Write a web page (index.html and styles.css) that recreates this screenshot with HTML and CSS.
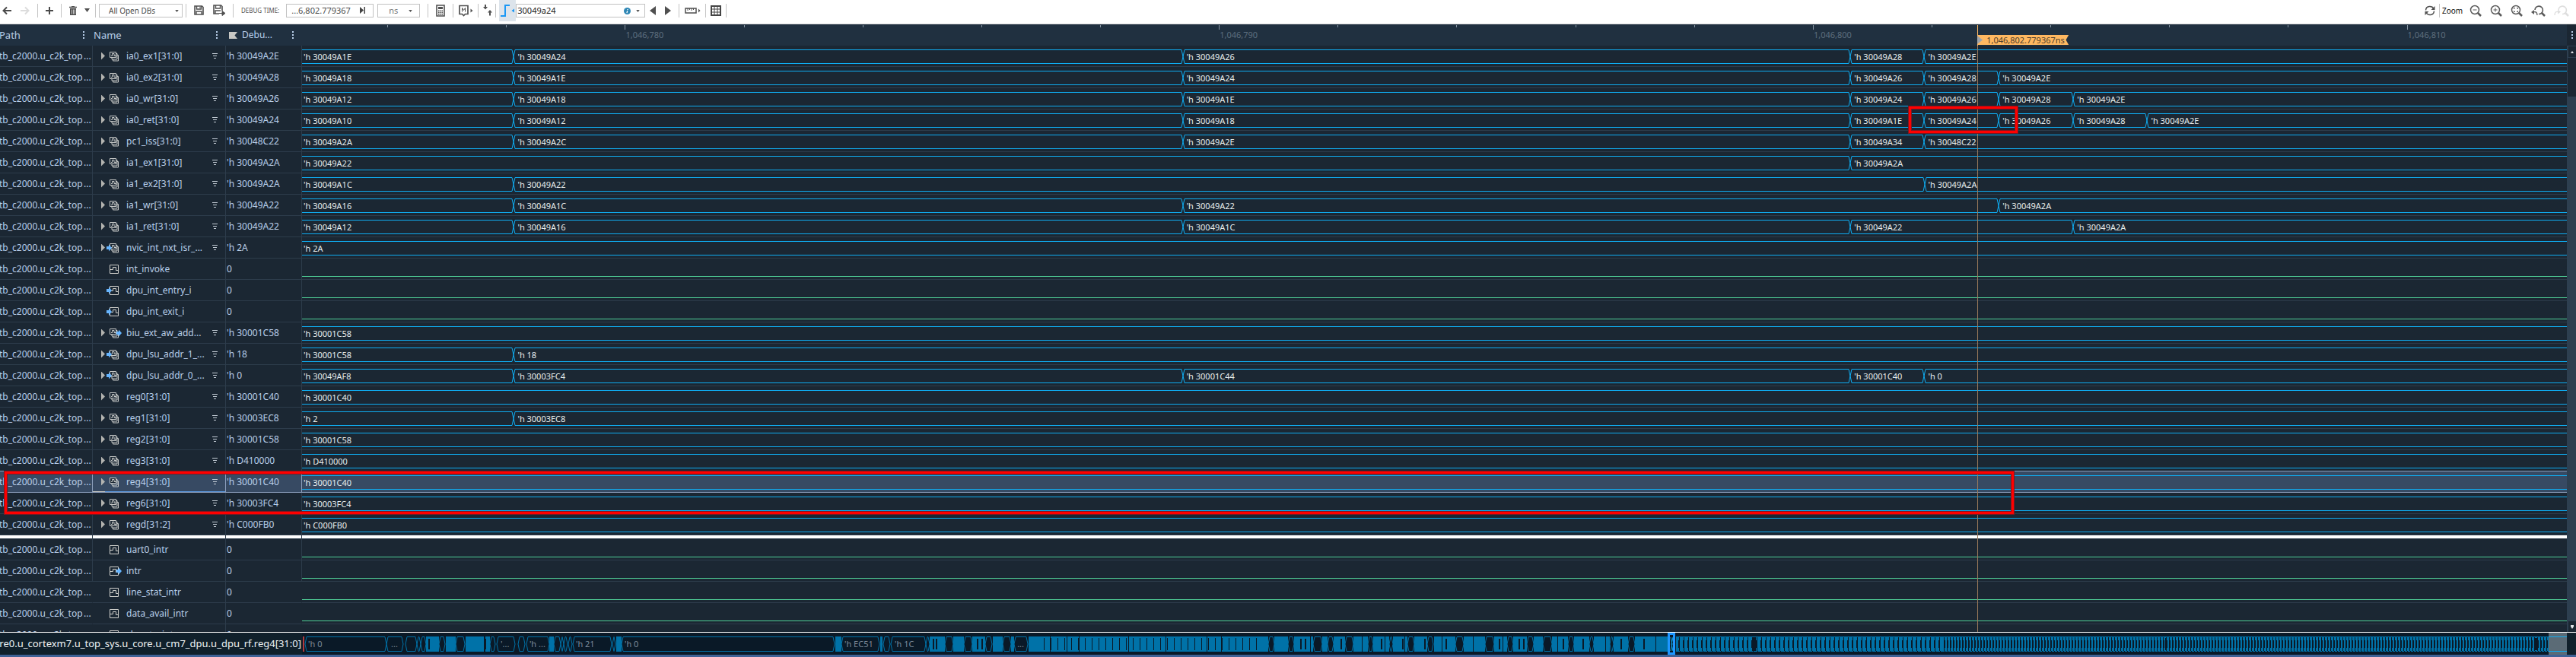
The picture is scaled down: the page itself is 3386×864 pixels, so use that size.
FILE: index.html
```html
<!DOCTYPE html>
<html lang="en">
<head>
<meta charset="utf-8">
<title>Waveform viewer</title>
<link rel="stylesheet" href="styles.css">
</head>
<body>
<svg class="sprite" aria-hidden="true">
  <symbol id="bus" viewBox="0 0 20 14">
    <path d="M4.500 1.500h8v7h-8z" fill="#1b2733" stroke="#c9cbc9"/>
    <path d="M6 6.500h1.500v-3h2.500v3h2" fill="none" stroke="#c9cbc9"/>
    <path d="M12.500 3.500h1.500v7.500h-7v-2.500M14 5.500h1.500v7.500h-7v-2" fill="none" stroke="#c9cbc9"/>
  </symbol>
  <symbol id="bit" viewBox="0 0 20 14">
    <path d="M4.500 1.500h11v11h-11z" fill="none" stroke="#d0d0cc"/>
    <path d="M5 7.500h3.500v-3h4v4h2.500" fill="none" stroke="#d0d0cc"/>
  </symbol>
  <symbol id="in" viewBox="0 0 20 14"><path d="M0 5h3V2.500L7 7l-4 4.500V9H0z" fill="#66b5ff"/></symbol>
  <symbol id="out" viewBox="0 0 20 14"><path d="M13 5h3V2.500L20 7l-4 4.500V9h-3z" fill="#66b5ff"/></symbol>
  <symbol id="filter" viewBox="0 0 8 8"><path d="M0 .5h7M1 3.500h5M2 6.500h3" stroke="#c2cbd4" fill="none"/></symbol>
  <symbol id="cross" viewBox="0 0 6 19"><path d="M0 .5h1l4 18h1M6 .5H5l-4 18H0" stroke="#0fadf2" fill="none"/></symbol>
  <symbol id="caret" viewBox="0 0 6 4"><path d="M0 0h6L3 4z" fill="#555"/></symbol>
  <symbol id="lens" viewBox="0 0 16 16"><circle cx="7" cy="7" r="5.500" fill="none" stroke="currentColor" stroke-width="1.500"/><path d="M11 11l4 4" stroke="currentColor" stroke-width="2.500"/></symbol>
</svg>

<header class="toolbar">
  <button class="tool" aria-label="Back"><svg width="12" height="12" viewBox="0 0 12 12"><path d="M12 6H2M6 1.500L1.500 6 6 10.500" fill="none" stroke="#4a4a4a" stroke-width="2"/></svg></button>
  <button class="tool after-wide" aria-label="Forward"><svg width="12" height="12" viewBox="0 0 12 12"><path d="M0 6h10M6 1.500L10.500 6 6 10.500" fill="none" stroke="#dcdcdc" stroke-width="2"/></svg></button>
  <i class="sep"></i>
  <button class="tool" aria-label="Add"><svg width="10" height="10" viewBox="0 0 10 10"><path d="M5 0v10M0 5h10" stroke="#4a4a4a" stroke-width="2"/></svg></button>
  <i class="sep"></i>
  <button class="tool" aria-label="Delete"><svg width="10" height="12" viewBox="0 0 10 12"><path d="M0 1.500h10M3 .5h4" stroke="#505050" stroke-width="1.500"/><path d="M1 3h8v9H1z" fill="#505050"/><path d="M3.500 4.500v6M5.500 4.500v6M7.500 4.500v6" stroke="#fff" stroke-width=".7"/></svg></button>
  <button class="tool after" aria-label="Delete options"><svg width="7" height="5" viewBox="0 0 7 5"><path d="M0 0h7L3.500 5z" fill="#505050"/></svg></button>
  <i class="sep narrow"></i>
  <span class="field db"><select aria-label="Database"><option>All Open DBs</option></select><svg class="drop" width="5" height="3"><use href="#caret"/></svg></span>
  <i class="sep tight"></i>
  <button class="tool indent" aria-label="Save"><svg width="13" height="13" viewBox="0 0 13 13"><path d="M1 1h9.500L12 2.500V12H1z" fill="none" stroke="#505050" stroke-width="1.600"/><path d="M3.500 1v4h6V1M3 12V8h7v4" fill="none" stroke="#505050" stroke-width="1.400"/><path d="M8 2v2" stroke="#505050"/></svg></button>
  <button class="tool after-wide" aria-label="Save as"><svg width="16" height="15" viewBox="0 0 16 15"><path d="M8 12H1V1h9.500L12 2.500V8" fill="none" stroke="#505050" stroke-width="1.600"/><path d="M3.500 1v4h6V1M3 12V8h7" fill="none" stroke="#505050" stroke-width="1.400"/><path d="M8 11.500h5M12 8.500l4 3-4 3z" stroke="#505050" fill="#505050"/></svg></button>
  <i class="sep"></i>
  <label class="caption" for="time">DEBUG TIME:</label>
  <span class="field time"><input id="time" value="...6,802.779367"><svg class="next" width="8" height="9" viewBox="0 0 8 9"><path d="M0 0l5 4.500L0 9zM5.500 0H7v9H5.500z" fill="#444"/></svg></span>
  <span class="field unit"><select aria-label="Time unit"><option>ns</option></select><svg class="drop" width="5" height="3"><use href="#caret"/></svg></span>
  <i class="sep"></i>
  <button class="tool" aria-label="Calculator"><svg width="12" height="16" viewBox="0 0 12 16"><path d="M1 1h10v14H1z" fill="none" stroke="#505050" stroke-width="1.600"/><path d="M3 3h6v3H3zM3 7.500h1.500V9H3zM5.200 7.500h1.500V9H5.200zM7.500 7.500H9V9H7.500zM3 9.800h1.500v1.400H3zM5.200 9.800h1.500v1.400H5.200zM7.500 9.800H9v1.400H7.500zM3 12h1.500v1.400H3zM5.200 12h1.500v1.400H5.200zM7.500 12H9v1.400H7.500z" fill="#505050"/></svg></button>
  <i class="sep"></i>
  <button class="tool pull" aria-label="Marker"><svg width="19" height="16" viewBox="0 0 19 16"><path d="M1 1.500h11v11H8.500l-2 2-2-2H1z" fill="none" stroke="#505050" stroke-width="1.700"/><path d="M4.500 9.500v-5l2 3 2-3v5" fill="none" stroke="#505050"/><path d="M15.500 5.500l3 2.500-3 2.500z" fill="#505050"/></svg></button>
  <i class="sep snug"></i>
  <button class="tool" aria-label="Snap to edge"><svg width="12" height="15" viewBox="0 0 12 15"><path d="M2 0h2v3h2L3 6.500 0 3h2zM8 14.500h2v-4h2L9 7l-3 3.500h2z" fill="#505050"/></svg></button>
  <i class="sep tight"></i>
  <button class="edge" aria-label="Search value"><svg width="19" height="16" viewBox="0 0 19 16"><path d="M0 15h6V1h6" fill="none" stroke="#1b98f5" stroke-width="2"/><path d="M18 5.500v5L14.500 8z" fill="#1b98f5"/></svg></button>
  <span class="field find"><input aria-label="Value to find" value="30049a24"><svg class="info" width="9" height="9" viewBox="0 0 9 9"><circle cx="4.500" cy="4.500" r="4.500" fill="#2f87b5"/><path d="M5 2v1M4.700 4L4 7.200" stroke="#fff" stroke-width="1.300"/></svg><svg class="drop" width="5" height="3"><use href="#caret"/></svg></span>
  <button class="tool gap" aria-label="Previous"><svg width="8" height="12" viewBox="0 0 8 12"><path d="M8 0v12L0 6z" fill="#505050"/></svg></button>
  <button class="tool after-wide" aria-label="Next"><svg width="8" height="12" viewBox="0 0 8 12"><path d="M0 0v12l8-6z" fill="#505050"/></svg></button>
  <i class="sep"></i>
  <button class="tool pull" aria-label="Ruler"><svg width="21" height="8" viewBox="0 0 21 8"><path d="M1 1h14v6H1z" fill="none" stroke="#505050" stroke-width="1.500"/><path d="M4 1v3M6.500 1v2M9 1v3M11.500 1v2" stroke="#505050"/><path d="M18 1.500L20.500 4 18 6.500z" fill="#505050"/></svg></button>
  <i class="sep snug"></i>
  <button class="tool" aria-label="Table"><svg width="14" height="14" viewBox="0 0 14 14"><path d="M1 1h12v12H1z" fill="none" stroke="#444" stroke-width="2"/><path d="M5 1v12M9 1v12M1 5h12M1 9h12" stroke="#444"/></svg></button>
  <i class="sep snug"></i>
  <div class="zoom">
    <button class="tool" aria-label="Refresh"><svg width="14" height="14" viewBox="0 0 14 14"><path d="M1.500 6.500C2 0 10 .5 12 4.500M12.500 7.500C12 14 4 13.500 2 9.500" fill="none" stroke="#505050" stroke-width="1.500"/><path d="M13.500 1v5h-5zM.5 13V8h5z" fill="#505050"/></svg></button>
    <i class="sep zoomsep"></i>
    <span class="zoomlabel">Zoom</span>
    <button class="tool lens" aria-label="Zoom out"><svg width="16" height="16" viewBox="0 0 16 16"><use href="#lens"/><path d="M4.500 7h5" stroke="currentColor"/></svg></button>
    <button class="tool lens" aria-label="Zoom in"><svg width="16" height="16" viewBox="0 0 16 16"><use href="#lens"/><path d="M4.500 7h5M7 4.500v5" stroke="currentColor"/></svg></button>
    <button class="tool lens" aria-label="Zoom to fit"><svg width="16" height="16" viewBox="0 0 16 16"><use href="#lens"/><path d="M4.500 6V4.500H6M8 4.500h1.500V6M9.500 8v1.500H8M6 9.500H4.500V8" fill="none" stroke="currentColor"/></svg></button>
    <button class="tool lens" aria-label="Previous zoom"><svg width="19" height="16" viewBox="0 0 19 16"><path d="M5 7a5.200 5.200 0 1 1 5 5.500" fill="none" stroke="currentColor" stroke-width="1.600"/><path d="M14 11l4 4" stroke="currentColor" stroke-width="2.500"/><path d="M3 10c3-1 5 0 5 4" fill="none" stroke="currentColor" stroke-width="1.300"/><path d="M4 7v6L0 10z" fill="currentColor"/></svg></button>
    <button class="tool lens off" aria-label="Next zoom"><svg width="20" height="16" viewBox="0 0 20 16"><path d="M6 7a5.200 5.200 0 1 1 5 5.500" fill="none" stroke="currentColor" stroke-width="1.600"/><path d="M15 11l4 4" stroke="currentColor" stroke-width="2.500"/><path d="M1 14c0-4 2-5 4-4.500" fill="none" stroke="currentColor" stroke-width="1.300"/><path d="M5 6.500v6L9 9.500z" fill="currentColor"/></svg></button>
  </div>
</header>

<main class="viewer">
  <div class="sheet">
    <table class="signals">
      <colgroup><col class="c-path"><col class="c-name"><col class="c-value"><col></colgroup>
      <thead>
        <tr>
          <th><div class="head path"><span>Path</span><i class="dots"></i></div></th>
          <th><div class="head name"><span>Name</span><i class="dots"></i></div></th>
          <th><div class="head value"><svg width="11" height="9" viewBox="0 0 11 9"><path d="M0 0h11L7.500 4.500 11 9H0z" fill="#c8c8c4"/></svg><span>Debu...</span><i class="dots"></i></div></th>
          <th><div class="ruler" id="ruler"></div></th>
        </tr>
      </thead>
      <tbody id="rows"></tbody>
    </table>
    <div class="overlay">
      <div class="cursor" id="cursor"><span class="flag"><svg width="7" height="11" viewBox="0 0 7 11"><path d="M0 0l7 5.500L0 11z" fill="#9aa3ad"/></svg>1,046,802.779367ns</span></div>
      <div class="mark value-mark"></div>
    </div>
  </div>
  <div class="side">
    <div class="corner"><i class="dots"></i></div>
    <div class="scroll">
      <button class="step" aria-label="Scroll up"><svg width="4" height="3"><path d="M0 3h4L2 0z" fill="#e0e4e8"/></svg></button>
      <div class="thumb"></div>
      <button class="step last" aria-label="Scroll down"><svg width="4" height="5"><path d="M0 0h4v2L2 5 0 2z" fill="#e0e4e8"/></svg></button>
    </div>
  </div>
  <div class="mark row-mark"></div>
</main>

<footer class="overview">
  <div class="trace">..re0.u_cortexm7.u_top_sys.u_core.u_cm7_dpu.u_dpu_rf.reg4[31:0]</div>
  <div class="map" id="map"></div>
  <div class="end"></div>
</footer>
<script src="app.js"></script>
</body>
</html>
```

FILE: styles.css
```css
* { box-sizing: border-box; }
body {
  margin: 0;
  height: 100vh;
  display: flex;
  flex-direction: column;
  overflow: hidden;
  background: #1b2733;
  color: #b9cfea;
  font: 12px/16px "Noto Sans", "Open Sans", sans-serif;
}
svg { display: block; flex: none; }
.sprite { position: absolute; width: 0; height: 0; }
button { border: 0; padding: 0; background: none; color: #5a5a5a; flex: none; display: flex; align-items: center; justify-content: center; }
input, select { font: inherit; color: inherit; border: 0; background: none; padding: 0; min-width: 0; outline: 0; appearance: none; height: 16px; }

/* Toolbar */
.toolbar {
  flex: none;
  height: 32px;
  padding: 0 9px 4px 3px;
  display: flex;
  align-items: center;
  background: #fff;
  border-bottom: 1px solid #dcdcdc;
  color: #4c4c4c;
  font-size: 11px;
}
.tool + .tool { margin-left: 12px; }
.tool.after { margin-left: 10px; }
.gap { margin-left: 6px; }
.pull { margin-left: -3px; }
.sep { flex: none; width: 1px; height: 18px; background: #c4c4c4; margin: 0 10px; }
.sep.narrow { margin: 0 4px 0 7px; }
.sep.tight { margin: 0 4px; }
.sep.snug { margin: 0 6px; }
.indent { margin-left: 6px; }
.field { flex: none; height: 18px; border: 1px solid #c2c2c2; display: flex; align-items: center; position: relative; }
.field select, .field input { flex: 1; width: 0; }
.drop { position: absolute; right: 4px; top: 7px; }
.db { width: 110px; padding-left: 12px; font-size: 10px; }
.caption { font-size: 8px; margin-right: 9px; color: #555; white-space: nowrap; }
.time { width: 115px; padding-left: 6px; margin-right: 5px; }
.next { position: absolute; right: 9px; top: 3px; }
.unit { width: 56px; padding-left: 14px; color: #777; }
.unit .drop { right: 9px; }
.edge { width: 22px; height: 28px; background: #dde4eb; }
.find { width: 170px; padding-left: 1px; color: #222; }
.find .drop { right: 6px; }
.info { position: absolute; right: 18px; top: 4px; }
.zoom { margin-left: auto; display: flex; align-items: center; }
.zoomsep { margin: 0 3px 0 5px; }
.zoomlabel { font-size: 10px; color: #111; width: 27px; margin-right: 9px; }
.lens.off { color: #dedede; }
.zoom .lens + .lens { margin-left: 11px; }

/* Signal sheet */
.viewer { flex: 1; min-height: 0; display: flex; position: relative; overflow: hidden; }
.sheet { flex: 1; min-width: 0; position: relative; overflow: hidden; }
.signals { width: 100%; table-layout: fixed; border-spacing: 0; }
.c-path { width: 122px; }
.c-name { width: 175px; }
.c-value { width: 100px; }
th, td { padding: 0; font-weight: 400; text-align: left; vertical-align: top; white-space: nowrap; }
th { height: 28px; background: #203040; }
td { height: 28px; border-bottom: 1px solid #2d3c4b; }
td:nth-child(-n+3) { border-right: 1px solid #2d3c4b; }
tr.open td:nth-child(1), tr.open td:nth-child(3) { border-right-color: transparent; }
.head { display: flex; align-items: center; height: 28px; }
.head.path { margin-left: -1px; padding-right: 11px; font-size: 13px; }
.head.name { padding: 0 11px 0 1px; font-size: 13px; }
.head.value { padding: 0 11px 0 4px; gap: 6px; }
.dots { width: 2px; height: 11px; margin-left: auto; background: linear-gradient(#b9cfea 2px, transparent 2px 4px, #b9cfea 4px 6px, transparent 6px 8px, #b9cfea 8px 10px, transparent 10px); }
.cell { display: flex; align-items: center; height: 27px; }
.cell.path span { width: 111px; margin-left: -1px; overflow: hidden; }
.cell.value { padding-left: 1px; }
.cell.name { padding: 0 9px 0 11px; }
.expand { width: 5px; height: 10px; background: #b4b4b0; clip-path: polygon(0 0, 100% 50%, 0 100%); }
.expand.none { visibility: hidden; }
.kind { width: 20px; height: 14px; margin: 0 6px 0 2px; }
.filter { width: 8px; height: 8px; margin-left: auto; }

tr.before td { border-bottom-color: #8c9fbd; }
tr.selected td { background: #374a63; border-color: #8c9fbd; }
tr.selected .cell.name { background: linear-gradient(to right, #c8c8c4 16px, #5a97dc 16px) bottom / 100% 1px no-repeat; }
tr.divider td { height: 5px; background: #fff; border-bottom-color: #2d3c4b; }

/* Waveforms */
.wave { display: flex; height: 19px; margin: 5px 0 3px; color: #e6ecec; font-size: 11px; line-height: 17px; }
.seg { display: flex; min-width: 0; }
.cross { width: 6px; height: 19px; margin-left: -3px; }
.level { flex: 1; min-width: 0; padding-left: 2px; border: solid #0fadf2; border-width: 1px 0; }
.seg:not(:last-child) .level { margin-right: 3px; }
.low { height: 19px; margin: 5px 0 3px; border-bottom: 1px solid #4fcf97; }

.ruler { position: relative; height: 28px; color: #5d6e7e; font-size: 11px; }
.tick { position: absolute; top: 1px; height: 3px; border-left: 1px solid #8795a3; }
.tick.major { height: 6px; }
.tick span { position: absolute; left: 0; top: 5px; }
.overlay { position: absolute; left: 397px; right: 0; top: 0; bottom: 0; pointer-events: none; }
.cursor { position: absolute; top: 1px; bottom: 0; width: 1px; background: linear-gradient(#ffb861 27px, #98795a 27px); }
.flag { position: absolute; left: 0; top: 13px; height: 13px; width: 120px; display: flex; align-items: center; gap: 5px; background: #ffb861; color: #4b3d2c; font-size: 11px; line-height: 13px; white-space: nowrap; clip-path: polygon(0 0, 100% 0, 97% 50%, 100% 100%, 0 100%); }
.mark { position: absolute; border: 3px solid #f00; outline: 1px solid #7b1722; box-shadow: inset 0 0 0 1px #7b1722; }
.value-mark { left: 70.95%; width: 4.8%; top: 108px; height: 35px; }
.row-mark { left: 6px; width: 78%; top: 588px; height: 56px; pointer-events: none; }

.side { flex: none; width: 12px; display: flex; flex-direction: column; }
.corner { height: 28px; flex: none; display: flex; align-items: center; padding-right: 4px; }
.scroll { flex: 1; display: flex; flex-direction: column; background: #2d3f50; padding: 1px 0 0 1px; }
.step { height: 14px; background: #1b2733; margin: 0 0 1px 1px; }
.step.last { margin: auto 0 0 1px; }
.thumb { height: 51px; background: #1b2733; }

/* Overview strip */
.overview { flex: none; height: 33px; display: flex; background: #10202b; border-top: 1px solid #fff; border-bottom: 3px solid #3f6296; }
.trace { width: 397px; flex: none; display: flex; justify-content: flex-end; padding-right: 1px; color: #f0f4f4; font-size: 13px; line-height: 28px; white-space: nowrap; overflow: hidden; }
.map { flex: 1; min-width: 0; position: relative; background: #0a1927; overflow: hidden; }
.map svg { width: 100%; height: 29px; }
.map span { position: absolute; top: 7px; font-size: 11px; line-height: 16px; color: #7c8b99; }
.end { width: 12px; flex: none; }
```

FILE: app.js
```js
const START = 774.563, SPAN = 38.132;
const pct = t => ((t - START) / SPAN * 100).toFixed(3) + '%';
const A = 778.129, B = 789.391, C = 800.632, D = 801.878, E = 803.13, F = 804.387, G = 805.631;

// name, kind, port direction, value at cursor, [first value, time, value, ...]
const signals = [
  ['ia0_ex1[31:0]', 'bus', '', "'h 30049A2E", ['30049A1E', A, '30049A24', B, '30049A26', C, '30049A28', D, '30049A2E']],
  ['ia0_ex2[31:0]', 'bus', '', "'h 30049A28", ['30049A18', A, '30049A1E', B, '30049A24', C, '30049A26', D, '30049A28', E, '30049A2E']],
  ['ia0_wr[31:0]', 'bus', '', "'h 30049A26", ['30049A12', A, '30049A18', B, '30049A1E', C, '30049A24', D, '30049A26', E, '30049A28', F, '30049A2E']],
  ['ia0_ret[31:0]', 'bus', '', "'h 30049A24", ['30049A10', A, '30049A12', B, '30049A18', C, '30049A1E', D, '30049A24', E, '30049A26', F, '30049A28', G, '30049A2E']],
  ['pc1_iss[31:0]', 'bus', '', "'h 30048C22", ['30049A2A', A, '30049A2C', B, '30049A2E', C, '30049A34', D, '30048C22']],
  ['ia1_ex1[31:0]', 'bus', '', "'h 30049A2A", ['30049A22', C, '30049A2A']],
  ['ia1_ex2[31:0]', 'bus', '', "'h 30049A2A", ['30049A1C', A, '30049A22', D, '30049A2A']],
  ['ia1_wr[31:0]', 'bus', '', "'h 30049A22", ['30049A16', A, '30049A1C', B, '30049A22', E, '30049A2A']],
  ['ia1_ret[31:0]', 'bus', '', "'h 30049A22", ['30049A12', A, '30049A16', B, '30049A1C', C, '30049A22', F, '30049A2A']],
  ['nvic_int_nxt_isr_...', 'bus', 'in', "'h 2A", ['2A']],
  ['int_invoke', 'bit', '', '0'],
  ['dpu_int_entry_i', 'bit', 'in', '0'],
  ['dpu_int_exit_i', 'bit', 'in', '0'],
  ['biu_ext_aw_add...', 'bus', 'out', "'h 30001C58", ['30001C58']],
  ['dpu_lsu_addr_1_...', 'bus', 'in', "'h 18", ['30001C58', A, '18']],
  ['dpu_lsu_addr_0_...', 'bus', 'in', "'h 0", ['30049AF8', A, '30003FC4', B, '30001C44', C, '30001C40', D, '0']],
  ['reg0[31:0]', 'bus', '', "'h 30001C40", ['30001C40']],
  ['reg1[31:0]', 'bus', '', "'h 30003EC8", ['2', A, '30003EC8']],
  ['reg2[31:0]', 'bus', '', "'h 30001C58", ['30001C58']],
  ['reg3[31:0]', 'bus', '', "'h D410000", ['D410000'], 'before'],
  ['reg4[31:0]', 'bus', '', "'h 30001C40", ['30001C40'], 'selected'],
  ['reg6[31:0]', 'bus', '', "'h 30003FC4", ['30003FC4']],
  ['regd[31:2]', 'bus', '', "'h C000FB0", ['C000FB0']],
  null,
  ['uart0_intr', 'bit', '', '0'],
  ['intr', 'bit', 'out', '0'],
  ['line_stat_intr', 'bit', '', '0', null, 'open'],
  ['data_avail_intr', 'bit', '', '0', null, 'open'],
  ['char_to_intr', 'bit', '', '0', null, 'open']
];

function wave(v) {
  if (!v) return '<div class="low"></div>';
  let html = '';
  for (let i = 0; i < v.length; i += 2) {
    const from = i ? v[i - 1] : START;
    const to = i + 1 < v.length ? v[i + 1] : START + SPAN;
    const width = ((to - from) / SPAN * 100).toFixed(3);
    html += `<div class="seg" style="width:${width}%">${i ? '<svg class="cross"><use href="#cross"/></svg>' : ''}<div class="level">'h ${v[i]}</div></div>`;
  }
  return `<div class="wave">${html}</div>`;
}

document.getElementById('rows').innerHTML = signals.map(s => {
  if (!s) return '<tr class="divider"><td></td><td></td><td></td><td></td></tr>';
  const [name, kind, port, value, v, cls = ''] = s;
  const bus = kind === 'bus';
  return `<tr class="${cls}">
    <td><div class="cell path"><span>tb_c2000.u_c2k_top</span>...</div></td>
    <td><div class="cell name"><button class="expand${bus ? '' : ' none'}" aria-label="Expand ${name}"></button>
      <svg class="kind"><use href="#${kind}"/>${port ? `<use href="#${port}"/>` : ''}</svg>${name}
      ${bus ? '<svg class="filter"><use href="#filter"/></svg>' : ''}</div></td>
    <td><div class="cell value">${value}</div></td>
    <td>${wave(v)}</td></tr>`;
}).join('');

let ticks = '';
for (let t = 776; t <= 812; t += 2) {
  const major = t % 10 === 0;
  ticks += `<div class="tick${major ? ' major' : ''}" style="left:${pct(t)}">${major ? `<span>1,046,${t}</span>` : ''}</div>`;
}
document.getElementById('ruler').innerHTML = ticks;
document.getElementById('cursor').style.left = pct(802.77);

// Overview: x runs 397..3375. Open cells are long values, solid spans are dense activity.
const open = [[401,508],[508,530],[533,548],[548,553],[553,560],[577,585],[599,611],[644,651],[653,677],[681,690],[692,722],[728,737],[737,741],[741,746],[747,752],[753,804],[805,809],[817,1097],[1106,1156],[1161,1170],[1171,1217],[1217,1222],
  [1235,1238],[1242,1253],[1267,1278],[1295,1304],[1318,1329],[1333,1351],[1667,1675],[1680,1683],[1693,1701],[1726,1738],[1745,1753],[1768,1779],[1798,1805],[1826,1831],[1836,1840],[1850,1859],[1876,1884],[1913,1924],[1930,1933],[1952,1964],[1981,1989],[2007,2016],[2028,2040],[2061,2069],[2089,2095],[2099,2106],[2116,2121],[2140,2149],[2170,2174],[2181,2185]];
const solid = [[560,577],[586,599],[612,636],[638,644],[722,728],[810,817],[1098,1106],[1157,1160],[1222,1242],[1253,1267],[1278,1295],[1305,1318],[1329,1333],[1352,1667],[1675,1693],[1701,1726],[1738,1745],[1753,1768],[1779,1798],[1805,1826],[1831,1850],[1859,1876],[1885,1913],[1924,1952],[1964,1981],[1989,2007],[2016,2028],[2040,2061],[2069,2089],[2095,2116],[2121,2140],[2149,2192]];
const slots = [563,637,1226,1230,1284,1290,1709,1715,1762,1815,1843,1872,1900,1970,1996,2002,2054,2080,2130,2160];
let lines = open.map(([a, b]) => `M${a + 2} 24.500L${a} 15l2-9.500H${b - 2}L${b} 15l-2 9.500z`).join('');
let blocks = solid.map(([a, b]) => `M${a} 5h${b - a}v20H${a}z`).join('');
let gaps = slots.map(x => `M${x} 8h2v14h-2z`).join('');
for (let x = 1372; x < 1660; x += 9) gaps += `M${x} 7h1v16h-1z`;
for (const x of [1380,1402,1418,1483,1532,1586,1605,1722,1790,1820,1846,1895,1936,1975,2047,2110,2176]) gaps += `M${x} 5h1v20h-1z`;
document.getElementById('map').innerHTML = `
<svg viewBox="397 0 2977 29" preserveAspectRatio="none">
  <defs>
    <pattern id="slow" width="6" height="29" patternUnits="userSpaceOnUse"><path d="M0 5h6v1H0zM0 6h5v4H0zM0 10h4v10H0zM0 20h5v4H0zM1 24h5v1H1z" fill="#0072a8"/></pattern>
    <pattern id="fast" width="4" height="29" patternUnits="userSpaceOnUse"><path d="M0 5h4v1H0zM0 6h3v4H0zM1 10h2v10H1zM0 20h3v4H0zM1 24h3v1H1z" fill="#0072a8"/></pattern>
  </defs>
  <path d="${lines}" fill="none" stroke="#0072a8"/>
  <path d="${blocks}" fill="#0072a8"/>
  <path d="${gaps}" fill="#0a1927"/>
  <path d="M2203 5h350v20h-350z" fill="url(#slow)"/>
  <path d="M2553 5h797v20h-797z" fill="url(#fast)"/>
  <path d="M2304 6h4v18h-4zM2846 7h2v16h-2zM3332 7h3v16h-3z" fill="#0a1927"/>
  <path d="M3350 0h25v29h-25z" fill="#5b6b76"/>
  <path d="M3350 5.500h25M3350 24.500h25" stroke="#0fadf2"/>
  <path d="M398 5h2v20h-2z" fill="#b03c40"/>
  <path d="M2193.500 1.500h7v26h-7z" fill="#0a1927" stroke="#1e96ff" stroke-width="3"/>
  <path d="M2196 6l2 9-2 9M2199 6l-2 9 2 9" fill="none" stroke="#0fadf2"/>
</svg>` + [[405, "'h 0"], [514, '...'], [658, "'..."], [696, "'h ..."], [757, "'h 21"], [821, "'h 0"], [1110, "'h EC51"], [1176, "'h 1C"], [1337, '...']]
  .map(([x, s]) => `<span style="left:${((x - 397) / 29.77).toFixed(2)}%">${s}</span>`).join('');
```
